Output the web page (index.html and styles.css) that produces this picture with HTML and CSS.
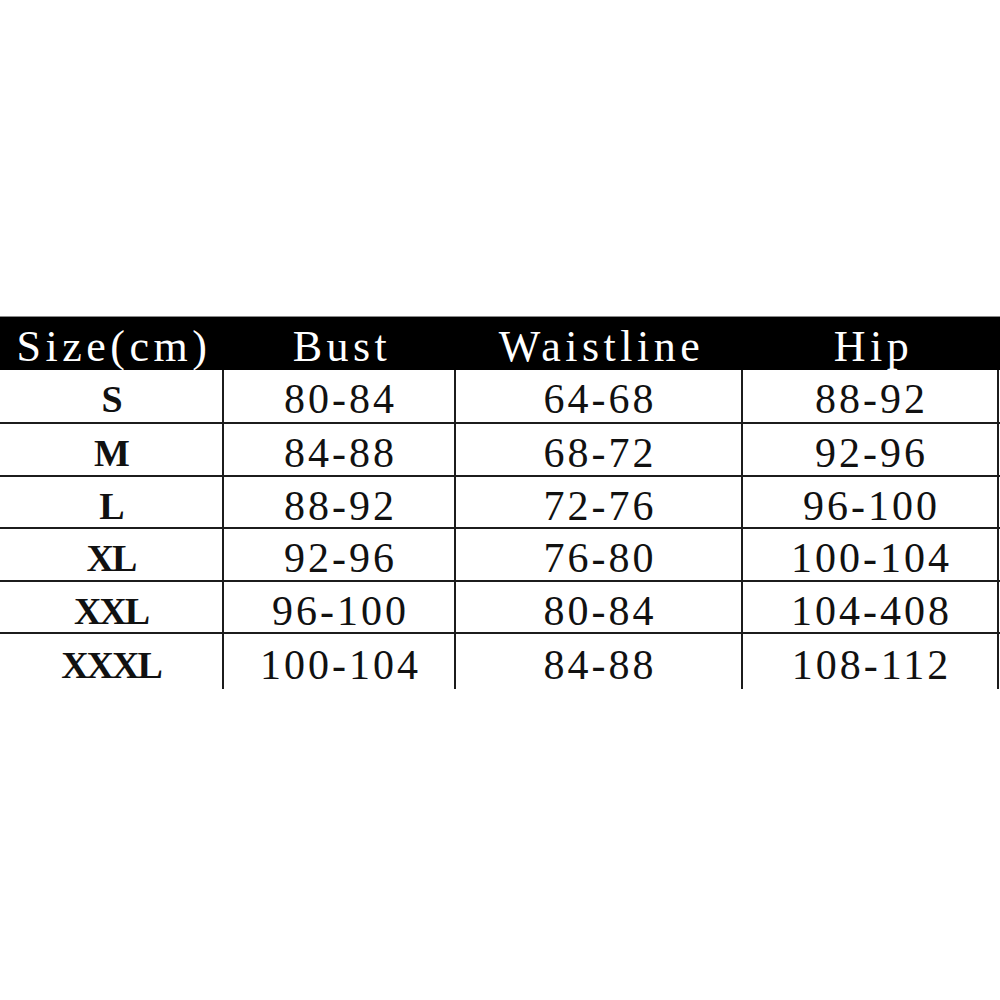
FILE: index.html
```html
<!DOCTYPE html>
<html>
<head>
<meta charset="utf-8">
<link rel="stylesheet" href="styles.css">
</head>
<body>
<div class="chart">
  <div class="head">
    <div class="hcell">Size(cm)</div>
    <div class="hcell">Bust</div>
    <div class="hcell">Waistline</div>
    <div class="hcell">Hip</div>
  </div>
  <div class="row first">
    <div class="cell label">S</div><div class="cell">80-84</div><div class="cell">64-68</div><div class="cell">88-92</div>
  </div>
  <div class="row">
    <div class="cell label">M</div><div class="cell">84-88</div><div class="cell">68-72</div><div class="cell">92-96</div>
  </div>
  <div class="row">
    <div class="cell label">L</div><div class="cell">88-92</div><div class="cell">72-76</div><div class="cell">96-100</div>
  </div>
  <div class="row">
    <div class="cell label">XL</div><div class="cell">92-96</div><div class="cell">76-80</div><div class="cell">100-104</div>
  </div>
  <div class="row">
    <div class="cell label">XXL</div><div class="cell">96-100</div><div class="cell">80-84</div><div class="cell">104-408</div>
  </div>
  <div class="row last">
    <div class="cell label">XXXL</div><div class="cell">100-104</div><div class="cell">84-88</div><div class="cell">108-112</div>
  </div>
</div>
</body>
</html>
```
FILE: styles.css
```css
html, body {
  margin: 0;
  padding: 0;
  background: #ffffff;
}
body {
  width: 1000px;
  height: 1000px;
  font-family: "Liberation Serif", "Times New Roman", serif;
  color: #111111;
}
.chart {
  padding-top: 316px;
}
.head {
  display: grid;
  grid-template-columns: 224px 232px 287px 257px;
  height: 54px;
  box-sizing: border-box;
  border-top: 1px solid #8a8a8a;
  background: #000000;
}
.hcell {
  display: flex;
  align-items: center;
  justify-content: center;
  color: #ffffff;
  font-size: 44px;
  letter-spacing: 4.5px;
  padding-left: 4px;
  padding-top: 4px;
}
.row {
  display: grid;
  grid-template-columns: 224px 232px 287px 256px;
  height: 52.4px;
  box-sizing: border-box;
  border-top: 2px solid #1c1c1c;
}
.row.first {
  border-top: none;
}
.row.last {
  height: 50.5px;
  padding-top: 0;
}
.cell {
  display: flex;
  align-items: center;
  justify-content: center;
  box-sizing: border-box;
  border-right: 2px solid #1c1c1c;
  font-size: 42px;
  letter-spacing: 3px;
  padding-left: 3px;
  padding-top: 5px;
}
.row.last .cell {
  padding-top: 7px;
}
.cell.label {
  font-weight: bold;
  font-size: 38px;
  letter-spacing: -2px;
  padding-left: 0;
}
```
